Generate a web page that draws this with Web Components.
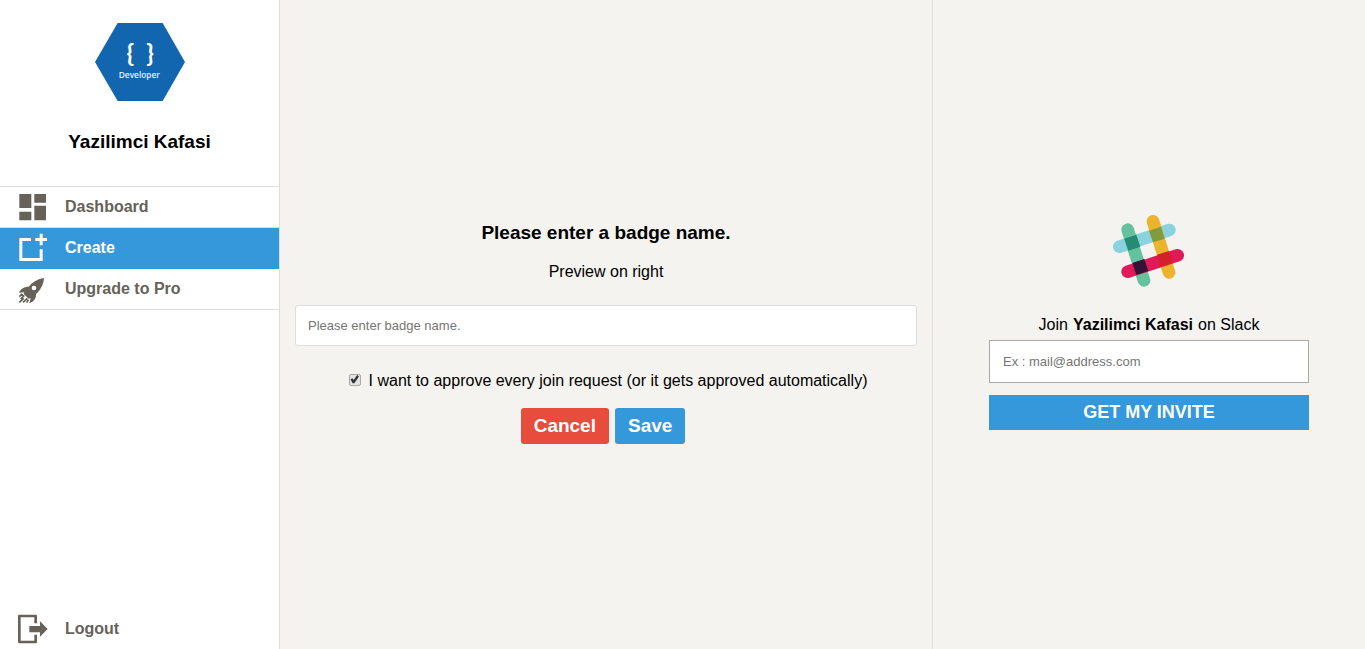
<!DOCTYPE html>
<html lang="en">
<head>
<meta charset="utf-8">
<title>Create badge</title>
<style>
body { margin: 0; font-family: "Liberation Sans", Arial, sans-serif; font-size: 16px; line-height: 18px; color: #000; background: #f4f3ef; }
</style>
</head>
<body>
<badge-app></badge-app>
<script>
const define = (name, html) => {
  const template = document.createElement('template');
  template.innerHTML = html;
  customElements.define(name, class extends HTMLElement {
    constructor() {
      super();
      this.attachShadow({ mode: 'open' }).append(template.content.cloneNode(true));
    }
  });
};

define('team-logo', `
<style>
:host { display: block; width: 90px; height: 78px; }
svg { display: block; width: 100%; height: 100%; }
.brace { font: bold 75px Lato, sans-serif; }
.word { font: 600 25px "Open Sans", sans-serif; }
</style>
<svg viewBox="105 39 270 234" role="img" aria-label="Developer">
  <path fill="#1266b0" d="M105 156 173 39H308L375 156 308 273H173Z"/>
  <g fill="#fff" text-anchor="middle">
    <text class="brace" x="211" y="156">{</text>
    <text class="brace" x="270" y="156">}</text>
    <text class="word" x="238" y="204" fill="#e6f0f8">Developer</text>
  </g>
</svg>`);

define('nav-item', `
<style>
:host { display: block; border-bottom: 1px solid #ddd; color: #66625a; }
:host([active]) { background: #3498db; border-color: #3498db; color: #fff; }
:host([plain]) { border-bottom: 0; }
a { display: flex; align-items: center; gap: 17px; height: 40px; padding-left: 18px; color: inherit; font-weight: bold; text-decoration: none; }
::slotted(svg) { display: block; width: 30px; height: 30px; fill: currentColor; }
</style>
<a href="#"><slot name="icon"></slot><span><slot></slot></span></a>`);

define('side-bar', `
<style>
:host { display: flex; flex-direction: column; background: #fff; border-right: 1px solid #ddd; }
header { display: flex; flex-direction: column; align-items: center; gap: 30px; padding: 23px 0 34px; }
h3 { margin: 0; font-size: 19px; line-height: 21px; }
nav { border-top: 1px solid #ddd; }
.end { margin-top: auto; }
</style>
<header><team-logo></team-logo><h3>Yazilimci Kafasi</h3></header>
<nav>
  <nav-item>
    <svg slot="icon" viewBox="0 0 90 90"><path d="M4 6H40V48H4ZM49 6H84V32H49ZM49 41H84V85H49ZM4 59H40V85H4Z"/></svg>
    Dashboard
  </nav-item>
  <nav-item active>
    <svg slot="icon" viewBox="0 0 90 90"><path d="M4 15H39V24H13V75H65V49H74V84H4ZM65 2H74V15H87V24H74V37H65V24H52V15H65Z"/></svg>
    Create
  </nav-item>
  <nav-item>
    <svg slot="icon" viewBox="0 0 90 90"><g transform="translate(0 5)"><path fill-rule="evenodd" d="M78 7C59 10 43 19 32 33C19 33 8 39 3 51L19 50L17 55L32 69L38 67L34 83C48 77 55 68 54 55C68 43 77 26 78 7ZM48 30A7 7 0 1 1 48 44A7 7 0 1 1 48 30Z"/><path fill="none" stroke="currentColor" stroke-width="5" d="M4 63 11 56 17 61 8 70M15 80 28 68M26 81 31 72M4 80 17 68"/></g></svg>
    Upgrade to Pro
  </nav-item>
</nav>
<nav-item class="end" plain>
  <svg slot="icon" viewBox="0 0 90 90"><path fill="none" stroke="currentColor" stroke-width="8" stroke-linejoin="round" d="M53 28V6H4V84H53V62"/><path d="M34 36H66V22L89 45 66 68V55H34Z"/></svg>
  Logout
</nav-item>`);

define('action-button', `
<style>
:host { display: block; }
button { display: block; height: 36px; padding: 0 13px; border: 0; border-radius: 3px; background: var(--fill, #3498db); color: #fff; font: bold 19px "Liberation Sans", Arial, sans-serif; cursor: pointer; }
</style>
<button type="button"><slot></slot></button>`);

define('badge-form', `
<style>
:host { display: flex; flex-direction: column; justify-content: center; box-sizing: border-box; padding: 16px 15px 0; text-align: center; border-right: 1px solid #ddd; }
h3 { margin: 0 0 19px; font-size: 19px; line-height: 22px; }
p { margin: 0 0 24px; }
.name { box-sizing: border-box; width: 100%; height: 41px; padding: 0 12px; border: 1px solid #ddd; border-radius: 3px; background: #fff; font: 13px "Liberation Sans", Arial, sans-serif; }
input::placeholder { color: #757575; }
.approve { display: flex; justify-content: center; align-items: center; gap: 8px; padding: 26px 0 18px 4px; }
.approve input { appearance: none; flex: none; box-sizing: border-box; width: 12px; height: 12px; margin: 0 0 2px; border: 1px solid #a9a9a9; border-radius: 2px; background: #e3e3e3; }
.approve input:checked::before { content: ""; display: block; width: 10px; height: 10px; background: #333; clip-path: polygon(10% 50%, 28% 38%, 42% 56%, 76% 6%, 94% 20%, 48% 88%, 32% 88%); }
.actions { display: flex; justify-content: center; gap: 6px; padding-right: 6px; }
.cancel { --fill: #e74c3c; }
</style>
<h3>Please enter a badge name.</h3>
<p>Preview on right</p>
<input class="name" type="text" aria-label="Badge name" placeholder="Please enter badge name.">
<label class="approve"><input type="checkbox" checked><span>I want to approve every join request (or it gets approved automatically)</span></label>
<div class="actions"><action-button class="cancel">Cancel</action-button><action-button>Save</action-button></div>`);

define('slack-mark', `
<style>
:host { display: block; width: 72px; height: 72px; }
svg { display: block; width: 100%; height: 100%; }
</style>
<svg viewBox="39 30 216 216" role="img" aria-label="Slack">
  <g fill="none" stroke-width="38" stroke-linecap="round">
    <path stroke="#89d3df" d="M58 125 208 75"/>
    <path stroke="#64c29f" d="M83 74 132 226"/>
    <path stroke="#ecb32d" d="M159 49 207 202"/>
    <path stroke="#e01a59" d="M83 200 233 151"/>
  </g>
  <path fill="#258b74" d="M73 101 109 89 121 125 85 137Z"/>
  <path fill="#819c3c" d="M147 77 183 65 194 101 159 112Z"/>
  <path fill="#d62027" d="M171 149 207 138 219 173 183 185Z"/>
  <path fill="#361238" d="M97 174 133 162 145 198 109 210Z"/>
</svg>`);

define('slack-invite', `
<style>
:host { display: flex; flex-direction: column; align-items: center; justify-content: center; }
section { display: flex; flex-direction: column; width: 320px; max-width: 90%; padding-bottom: 4px; }
slack-mark { align-self: center; }
p { display: flex; justify-content: center; gap: 5px; margin: 29px 0 6px; }
input { box-sizing: border-box; height: 43px; margin: 0 0 12px; padding: 0 13px; border: 1px solid #a9a9a9; border-radius: 0; background: #fff; font: 13px "Liberation Sans", Arial, sans-serif; }
input::placeholder { color: #757575; }
button { height: 35px; padding: 0; border: 0; background: #3498db; color: #fff; font: bold 18px "Liberation Sans", Arial, sans-serif; cursor: pointer; }
</style>
<section>
  <slack-mark></slack-mark>
  <p><span>Join</span> <b>Yazilimci Kafasi</b> <span>on Slack</span></p>
  <input type="email" aria-label="Email address" placeholder="Ex : mail@address.com">
  <button type="button">GET MY INVITE</button>
</section>`);

define('badge-app', `
<style>
:host { display: grid; grid-template-columns: 280px 653fr 432fr; min-height: 100vh; }
</style>
<side-bar></side-bar>
<badge-form></badge-form>
<slack-invite></slack-invite>`);
</script>
</body>
</html>
